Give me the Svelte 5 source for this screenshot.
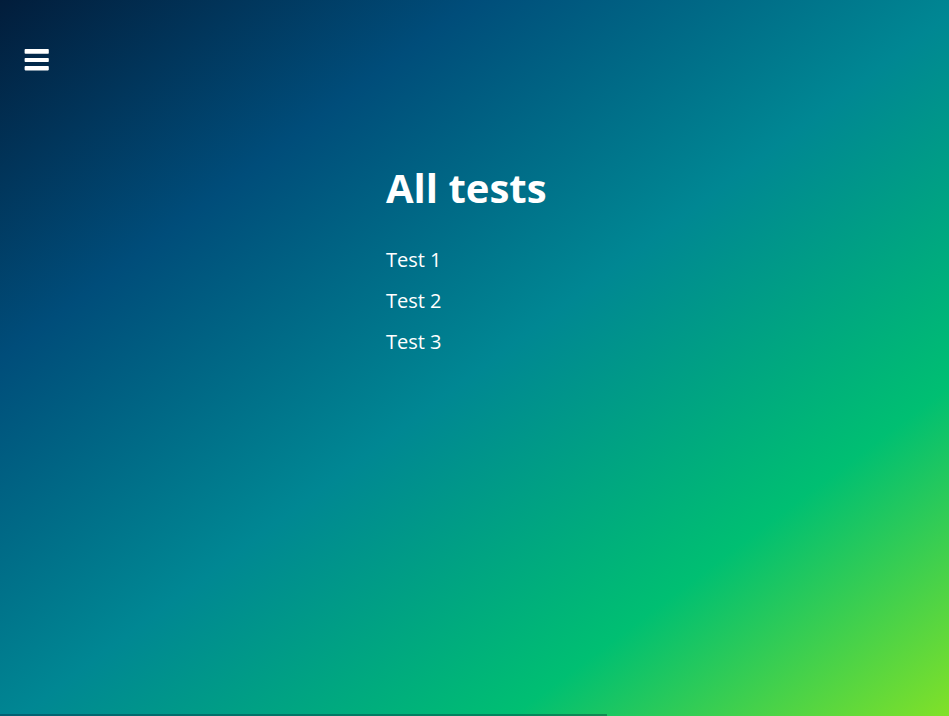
<script>
  const tests = ['Test 1', 'Test 2', 'Test 3'];
</script>

<div class="page">
  <header>
    <button type="button" class="menu" aria-label="Menu">
      <svg viewBox="0 0 25 22" width="25" height="22" fill="#fff" aria-hidden="true">
        <rect x="0.6" y="0.1" width="24.2" height="4.6" rx="0.8" />
        <rect x="0.6" y="8.9" width="24.2" height="4.1" rx="0.8" />
        <rect x="0.6" y="17.1" width="24.2" height="4.3" rx="0.8" />
      </svg>
    </button>
  </header>
  <main>
    <h1>All tests</h1>
    <ul>
      {#each tests as test}
        <li><a href="#{test.toLowerCase().replace(' ', '-')}">{test}</a></li>
      {/each}
    </ul>
  </main>
  <footer></footer>
</div>

<style>
  .page {
    box-sizing: border-box;
    min-height: 100vh;
    display: flex;
    flex-direction: column;
    color: #fff;
    font-family: 'Segoe UI', 'Open Sans', 'Noto Sans', sans-serif;
    background: linear-gradient(to bottom right, #021d3b, #004d7a 25%, #008793 51%, #00bf72 77%, #a8eb12 107%);
  }
  header {
    padding: 49px 24px 0;
  }
  .menu {
    display: block;
    padding: 0;
    border: 0;
    background: none;
    cursor: pointer;
  }
  .menu svg {
    display: block;
  }
  main {
    width: 177px;
    margin: 87px auto 0;
    flex: 1;
  }
  h1 {
    margin: 0 0 27px;
    font-size: 40px;
    line-height: 60px;
    font-weight: 700;
    white-space: nowrap;
  }
  ul {
    margin: 0;
    padding: 0;
    list-style: none;
    display: grid;
    gap: 11px;
  }
  li {
    font-size: 20px;
    line-height: 30px;
  }
  a {
    color: inherit;
    text-decoration: none;
  }
  footer {
    width: 64%;
    height: 2px;
    background: rgba(5, 25, 55, 0.35);
  }
</style>
